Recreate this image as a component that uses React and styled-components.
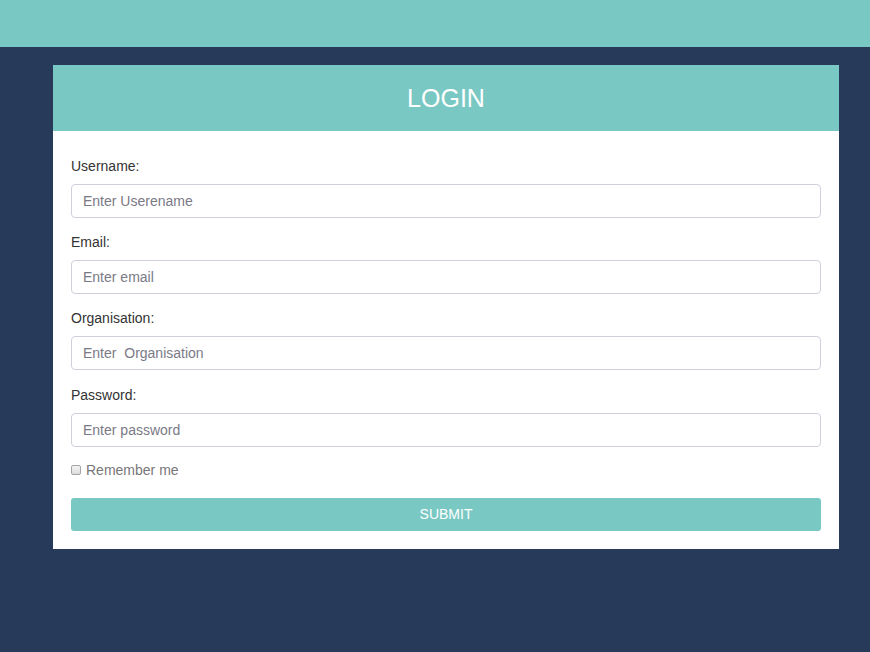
import React from "react";
import styled, { createGlobalStyle } from "styled-components";

const GlobalStyle = createGlobalStyle`
  html, body {
    margin: 0;
    padding: 0;
    background: #283a5a;
    font-family: "Liberation Sans", Arial, sans-serif;
    font-size: 14px;
    line-height: 20px;
    color: #333;
  }
  * {
    box-sizing: border-box;
  }
`;

const Page = styled.div`
  min-height: 652px;
  background: #283a5a;
`;

const TopBar = styled.div`
  height: 47px;
  background: #7ac8c4;
`;

const Card = styled.div`
  margin: 18px 31px 0 53px;
  background: #fff;
`;

const CardHeader = styled.div`
  height: 66px;
  background: #7ac8c4;
  display: flex;
  align-items: center;
  justify-content: center;
`;

const Title = styled.h1`
  margin: 0;
  color: #fff;
  font-size: 25px;
  font-weight: normal;
  line-height: 1;
`;

const Form = styled.form`
  padding: 25px 18px 18px;
  display: flex;
  flex-direction: column;
`;

const Group = styled.div`
  display: flex;
  flex-direction: column;
  margin-bottom: ${({ $wide }) => ($wide ? "15px" : "14px")};
`;

const Label = styled.label`
  line-height: 20px;
  margin-bottom: 8px;
  color: #333;
`;

const Input = styled.input`
  height: 34px;
  padding: 6px 11px;
  border: 1px solid #cfd0dc;
  border-radius: 4px;
  font-family: inherit;
  font-size: 14px;
  color: #555;
  outline: none;

  &::placeholder {
    color: #7a7a86;
  }
`;

const CheckRow = styled.label`
  display: flex;
  align-items: center;
  gap: 5px;
  margin: -1px 0 18px;
  line-height: 20px;
  color: #777;
`;

const Check = styled.input`
  appearance: none;
  margin: 0;
  width: 10px;
  height: 10px;
  border: 1px solid #a4a4a4;
  border-radius: 2px;
  background: linear-gradient(#f4f4f4, #dcdcdc);
`;

const Button = styled.button`
  height: 33px;
  padding: 0 0 2px;
  border: none;
  border-radius: 3px;
  background: #7ac8c4;
  color: #fff;
  font-family: inherit;
  font-size: 14px;
  line-height: 20px;
  text-transform: uppercase;
  cursor: pointer;
`;

const fields = [
  { id: "username", label: "Username:", placeholder: "Enter Userename", type: "text" },
  { id: "email", label: "Email:", placeholder: "Enter email", type: "email" },
  { id: "org", label: "Organisation:", placeholder: "Enter\u00a0 Organisation", type: "text", wide: true },
  { id: "password", label: "Password:", placeholder: "Enter password", type: "password" },
];

export default function App() {
  return (
    <Page>
      <GlobalStyle />
      <TopBar />
      <Card>
        <CardHeader>
          <Title>LOGIN</Title>
        </CardHeader>
        <Form onSubmit={(e) => e.preventDefault()}>
          {fields.map((f) => (
            <Group key={f.id} $wide={f.wide}>
              <Label htmlFor={f.id}>{f.label}</Label>
              <Input id={f.id} type={f.type} placeholder={f.placeholder} />
            </Group>
          ))}
          <CheckRow>
            <Check type="checkbox" />
            Remember me
          </CheckRow>
          <Button type="submit">Submit</Button>
        </Form>
      </Card>
    </Page>
  );
}
